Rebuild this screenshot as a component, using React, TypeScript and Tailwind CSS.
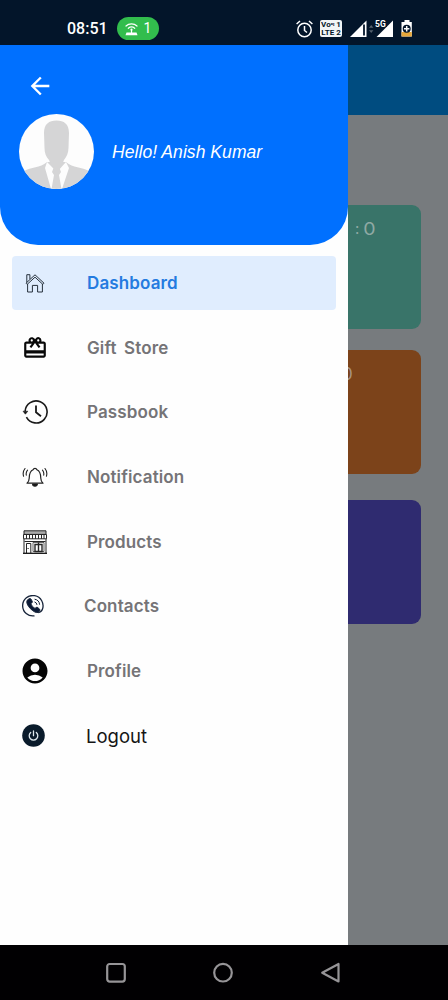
import type { ReactNode } from 'react';
import { MdAccountCircle, MdArrowBack, MdRedeem } from 'react-icons/md';

type Item = {
  label: string;
  icon: ReactNode;
  iconBox?: string;
  labelClass?: string;
  active?: boolean;
};

const labelBase = 'font-[Inter] text-[17px] leading-6 font-semibold tracking-[0.12px] [word-spacing:3px]';

function HomeIcon() {
  return (
    <svg width="20" height="20" viewBox="0 0 20 20" fill="none" stroke="#26313c" strokeWidth="1" strokeLinejoin="round">
      <path d="M1 10.2 10 1.8l9 8.4-1.1 1.2L10 4.2l-7.9 7.2z" />
      <path d="M1.8 9.2V1.7h3.1v4.4M2.6 11v8h4.8v-6.6h5.2V19h4.8v-8" />
    </svg>
  );
}

function HistoryIcon() {
  return (
    <svg width="26" height="26" viewBox="0 0 26 26" fill="none" stroke="#191919" strokeWidth="1.6">
      <path d="M3.1 12.4A11 11 0 1 1 4.4 18.2" />
      <path d="M14 6.5v6.7l5 4" strokeWidth="1.8" />
      <path d="M1 12.2h4.8l-2.4 3z" fill="#191919" strokeWidth="0.6" />
    </svg>
  );
}

function BellIcon() {
  return (
    <svg width="26" height="20" viewBox="0 0 26 20" fill="none" stroke="#222" strokeWidth="1.2" strokeLinecap="round" strokeLinejoin="round">
      <path d="M5 16.2h16c-1.7-1.3-2.1-2.6-2.2-5-.1-3.5-.5-7.3-3.9-8.4a2 2 0 0 0-3.8 0C7.7 3.9 7.3 7.7 7.2 11.2c-.1 2.4-.5 3.7-2.2 5z" />
      <path d="M10.600 17h4.800a2.400 2.200 0 0 1-4.800 0z" fill="#111" />
      <path d="M5.500 3.200a6 6 0 0 0-1.200 5M3 1.500a8.500 8.500 0 0 0-1.400 7.800M20.500 3.200a6 6 0 0 1 1.200 5M23 1.500a8.500 8.500 0 0 1 1.400 7.800" strokeWidth="1.1" />
    </svg>
  );
}

function StoreIcon() {
  return (
    <svg width="24" height="24" viewBox="0 0 24 24" fill="none" stroke="#262626" strokeWidth="1">
      <path d="M1 .8h22v3.600H1z" fill="#aaa" />
      <path d="M.5 4.500h23v4.300H.5zM3.500 4.500v4.300M6.500 4.500v4.300M9.500 4.500v4.300M12.500 4.500v4.300M15.500 4.500v4.300M18.500 4.500v4.300M21 4.500v4.300" />
      <path d="M1 9v14M23 9v14M1.500 11.500h21" />
      <path d="M3.500 23v-9.500h4.300V23M4.500 18.500h1.200" />
      <path d="M10 12.500h11v9H10z" strokeWidth="0.7" />
      <path d="M12 14.500h7v7h-7zM15.500 12.500v9" strokeWidth="1.4" />
      <path d="M0 23.300h24" stroke="#111" strokeWidth="1.3" />
    </svg>
  );
}

function ContactIcon() {
  return (
    <svg width="22" height="22" viewBox="0 0 22 22" fill="none" stroke="#17243a" strokeWidth="1.3">
      <path d="M12.500 20.800A10.200 10.200 0 1 1 20.400 14.300c-.8 2.300-2.500 3-4.200 3.300" />
      <path
        d="M5.300 5.100 7.400 3.600c.6-.4 1.100-.2 1.500.4l1.300 2.200c.4.7.2 1.200-.3 1.600l-1.100.9c.9 2 2.300 3.500 4.200 4.700l1.200-.9c.6-.4 1.100-.4 1.600.1l1.900 1.700c.5.5.5 1 .1 1.500l-1.600 1.600C12.500 19.100 2.400 9.500 5.300 5.100z"
        fill="#0b1a36"
        strokeWidth="1"
      />
      <path d="M12.500 6.900a3.500 3.500 0 0 1 2.500 3M12.600 4.200a6 6 0 0 1 5 5.500" strokeWidth="1" />
    </svg>
  );
}

function PowerIcon() {
  return (
    <svg width="23" height="23" viewBox="0 0 23 23" fill="none" stroke="#dfe9ee" strokeWidth="1.3" strokeLinecap="round">
      <circle cx="11.5" cy="11.5" r="11.3" fill="#0a1b2b" stroke="none" />
      <path d="M11.500 7v4.700M8.700 8.500a4.300 4.300 0 1 0 5.600 0" />
    </svg>
  );
}

const items: Item[] = [
  { label: 'Dashboard', icon: <HomeIcon />, active: true },
  { label: 'Gift Store', icon: <MdRedeem size={26} color="#080808" /> },
  { label: 'Passbook', icon: <HistoryIcon /> },
  { label: 'Notification', icon: <BellIcon /> },
  { label: 'Products', icon: <StoreIcon /> },
  { label: 'Contacts', icon: <ContactIcon />, iconBox: 'w-[22px] mr-[40px]' },
  { label: 'Profile', icon: <MdAccountCircle className="shrink-0" size={30} color="#050505" /> },
  {
    label: 'Logout',
    icon: <PowerIcon />,
    iconBox: 'w-[23px] mr-[41px]',
    labelClass: 'font-[Inter] text-[18.5px] leading-6 text-[#151515]',
  },
];

function StatusBar() {
  return (
    <header className="flex h-[45px] shrink-0 items-center bg-[#03152a] pt-[12px] pl-[67px] text-white">
      <span className="w-[50px] font-[Roboto] text-[16px] leading-5 font-medium">08:51</span>
      <span className="flex h-[23px] w-[42px] items-center justify-center gap-[6px] rounded-full bg-[#32bd4d]">
        <svg width="13" height="14" viewBox="0 0 13 14" fill="none" stroke="white" strokeWidth="1.2" strokeLinecap="round">
          <path d="M1 4a8 8 0 0 1 11 0M3.300 6.300a5 5 0 0 1 6.400 0" />
          <circle cx="6.5" cy="7.7" r="1.1" fill="white" stroke="none" />
          <path d="M6.500 8v3" />
          <path d="M1.500 10.500h10l1 2.700H.5z" fill="white" stroke="none" />
        </svg>
        <span className="font-[Roboto] text-[14px]">1</span>
      </span>
      <svg className="ml-[137px]" width="17" height="18" viewBox="0 0 17 18" fill="none" stroke="white" strokeWidth="1.5">
        <circle cx="8.5" cy="10" r="6.7" />
        <path d="M8.500 6v4.500l2.500 2M.6 4 4 1M16.400 4 13 1" />
      </svg>
      <span className="ml-[7px] flex h-[17px] w-[22px] flex-col justify-center rounded-[2px] bg-[#f2f5f7] text-center font-[Roboto] text-[8px] leading-[7.5px] font-bold whitespace-nowrap text-[#03152a]">
        <span>Vo<span className="text-[6px]">⁰ᴵ</span> 1</span>
        <span>LTE 2</span>
      </span>
      <svg className="ml-[8px]" width="64" height="20" viewBox="0 0 64 20">
        <path d="M0 18 16.500 1.500V18z" fill="white" />
        <path d="M14 5.500v11" stroke="#03152a" strokeWidth="1.8" />
        <path d="m19 8.700 2.200-2.700 2.200 2.700zM19 11.300l2.200 2.700 2.200-2.700z" fill="#56616e" />
        <path d="M26.500 18 43 1.500V18z" fill="white" />
        <path d="M24 0h13v8H24z" fill="#03152a" />
        <text x="25" y="8" fill="white" fontFamily="Roboto" fontSize="8.5" fontWeight="700">5G</text>
        <path d="M54.500 1h5v2h2.300v14.500H51.500V3h3z" fill="white" />
        <path d="M51.500 13h10.300v4.500H51.500z" fill="#e7a83c" />
        <circle cx="56.7" cy="9.7" r="4" fill="#03152a" />
        <path d="M56.700 7v5.400M54 9.700h5.400" stroke="white" strokeWidth="1.5" />
      </svg>
    </header>
  );
}

function Avatar() {
  return (
    <svg className="rounded-full" width="75" height="75" viewBox="0 0 75 75">
      <path d="M0 0h75v75H0z" fill="#fdfdfd" />
      <path d="M5 57c7-4 16-3 23-9h19c7 6 16 5 23 9L62 75H12z" fill="#d5d5d6" />
      <path d="M28 48 26 54l6 21h11l7-21-3-6-9 10z" fill="#fdfdfd" />
      <path d="M25 19c0-9 5-12.500 12.500-12.500S50 10 50 19l-.5 15c0 5-2 9-4.500 12l-2 5c-3 5-8 5-11 0l-2-5c-3-3-4.500-7-4.500-12z" fill="#d5d5d6" />
      <path d="M34.500 54h6l1.500 4-2 3 2.500 14h-10L35 61l-2-3z" fill="#d5d5d6" />
    </svg>
  );
}

function Drawer() {
  return (
    <aside className="flex w-[348px] shrink-0 flex-col bg-[#fefefe]">
      <div className="h-[200px] rounded-b-[38px] bg-[#0070ff] pt-[27px] pl-[18.5px] text-white">
        <MdArrowBack className="ml-[7.5px]" size={28} />
        <div className="mt-[14px] flex items-center">
          <Avatar />
          <span className="ml-[18.5px] text-[17.5px] leading-6 tracking-[0.06px] whitespace-nowrap italic">
            Hello! Anish Kumar
          </span>
        </div>
      </div>
      <nav className="flex flex-col gap-[10px] px-3 pt-[10.5px]">
        {items.map((item) => (
          <div
            key={item.label}
            className={`flex h-[54.7px] items-center rounded-[4px] pl-[10px] ${item.active ? 'bg-[#e0edfe]' : ''}`}
          >
            <span className={`flex shrink-0 items-center justify-center ${item.iconBox ?? 'mr-[39px] w-[26px]'}`}>
              {item.icon}
            </span>
            <span className={item.labelClass ?? `${labelBase} ${item.active ? 'text-[#247be0]' : 'text-[#757477]'}`}>
              {item.label}
            </span>
          </div>
        ))}
      </nav>
    </aside>
  );
}

// The strip of the dashboard that stays visible behind the open drawer.
function DimmedPage() {
  return (
    <main className="flex flex-1 flex-col bg-[#777b7e] font-[Inter] text-[#8fa9a4]">
      <div className="h-[70px] bg-[#004c80]" />
      <div className="mt-[90px] flex h-[124px] w-[73px] rounded-r-[9px] bg-[#397469] pt-[12px] pl-[7px] text-[17px] leading-6">
        <span className="mr-[5px] text-[15px]">:</span>
        <span className="scale-x-115">0</span>
      </div>
      <div className="mt-[21px] flex h-[124px] w-[73px] overflow-hidden rounded-r-[9px] bg-[#7c431a] pt-[12px] text-[17px] leading-6 text-[#a99380]">
        <span className="-ml-[6px]">0</span>
      </div>
      <div className="mt-[25.5px] h-[124px] w-[73px] rounded-r-[9px] bg-[#2f2b70]" />
    </main>
  );
}

function NavBar() {
  return (
    <footer className="flex h-[55px] shrink-0 items-center bg-[#010002] pl-[105px]">
      <svg width="236" height="22" viewBox="0 0 236 22" fill="none" stroke="#969497" strokeWidth="2.2" strokeLinejoin="round">
        <rect x="2.2" y="2" width="17.6" height="17.6" rx="2.5" />
        <circle cx="118" cy="10.7" r="8.8" />
        <path d="M233.500 2v17.500l-16.300-8.800z" />
      </svg>
    </footer>
  );
}

export default function App() {
  return (
    <div className="flex h-[1000px] w-[448px] flex-col overflow-hidden bg-black font-['Liberation_Sans',sans-serif]">
      <StatusBar />
      <div className="flex min-h-0 flex-1">
        <Drawer />
        <DimmedPage />
      </div>
      <NavBar />
    </div>
  );
}
